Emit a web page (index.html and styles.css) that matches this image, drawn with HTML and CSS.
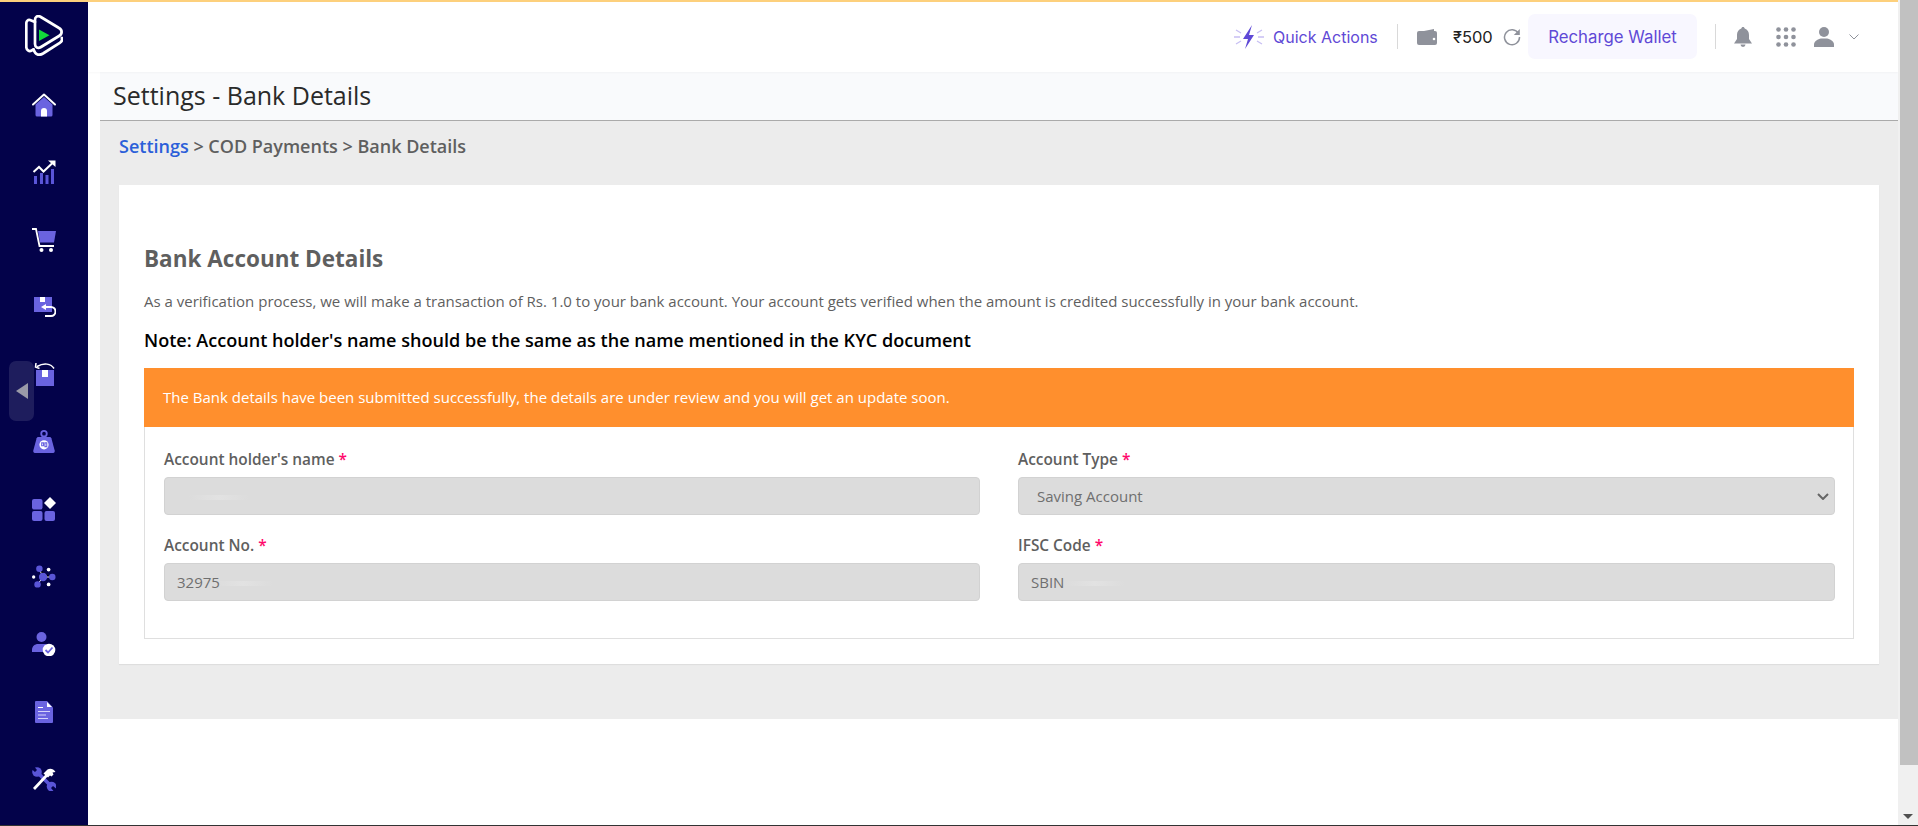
FILE: index.html
```html
<!DOCTYPE html>
<html lang="en">
<head>
<meta charset="utf-8">
<title>Settings - Bank Details</title>
<link rel="stylesheet" href="styles.css">
</head>
<body>
<div class="shell">
  <div class="window">
    <div class="topline"></div>
    <div class="frame">
      <aside class="sidebar">
        <svg class="logo" viewBox="0 0 38 41" fill="none" stroke="#fff" stroke-width="2.700" stroke-linejoin="round" stroke-linecap="round">
          <path d="M10 7 5 5C3 4.500 1.300 6 1.300 8.500V32c0 3 2.800 5 5.300 3.500L8.500 34.500"/>
          <path d="M10 5C10 2 12 .5 15 1.500L34 13c3.500 2 3.500 6 0 8L16 32c-3 1.800-6 .5-6-3z"/>
          <path d="M36.800 23c.8 2 0 3.500-2 4.800L18 38.500c-4 2.300-7.500 1.500-9.500-4"/>
          <path d="M14 14.500v11.500l10.500-5.700z" fill="#12d93a" stroke="none"/>
        </svg>
        <nav class="nav">
          <svg class="ic" viewBox="0 0 24 24"><path fill="#6a63e0" d="M3.500 11.500 12 4l8.500 7.500V22a1.500 1.500 0 0 1-1.500 1.500H5A1.500 1.500 0 0 1 3.500 22z"/><path fill="none" stroke="#fff" stroke-width="2" stroke-linecap="round" stroke-linejoin="round" d="M1 11.500 12 1.500l11 10"/><path fill="#fff" d="M9 23.500V18a3 3 0 0 1 6 0v5.500z"/></svg>
          <svg class="ic" viewBox="0 0 24 24"><path fill="#5a55d8" d="M2 16h3v8H2zM8 13h3v11H8zM13.500 15h3v9h-3zM19 9h3v15h-3z"/><path fill="none" stroke="#fff" stroke-width="2" d="m1.500 12 5.500-5 4.500 4.500 9-8.500"/><path fill="#fff" d="M16 .5h7.500V7z"/></svg>
          <svg class="ic" viewBox="0 0 24 24"><path fill="#6a63e0" d="M6 3h18l-2 11.500H8z"/><path fill="none" stroke="#fff" stroke-width="1.800" d="M0 1h4l3.500 17H22"/><circle cx="9.500" cy="22" r="2" fill="#fff"/><circle cx="19" cy="22" r="2" fill="#fff"/></svg>
          <svg class="ic" viewBox="0 0 24 24"><path fill="#6a63e0" d="M2 2h18v15H2z"/><path fill="#fff" d="M8 2h5v5H8zM14 9v6l-5-3z"/><path fill="none" stroke="#fff" stroke-width="2" d="M12 12h7a4.500 4.500 0 0 1 0 9h-6"/></svg>
          <svg class="ic" viewBox="0 0 24 24"><path fill="#6a63e0" d="M4 7h18v16H4z"/><path fill="#fff" d="M10 7h6v7h-6z"/><path fill="none" stroke="#fff" stroke-width="1.500" d="M22 5.500C19 .5 12-.5 5 3.500M4 0 3.500 4l4 1.500"/></svg>
          <svg class="ic" viewBox="0 0 24 26"><circle cx="12" cy="4" r="3" fill="none" stroke="#6a63e0" stroke-width="2"/><path fill="#6a63e0" d="M6 7.500h12c1 0 1.500.5 2 1.500l3.500 13c.5 2-.5 3-1.500 3H2c-1 0-2-1-1.500-3L4 9c.5-1 1-1.500 2-1.500z"/><circle cx="12" cy="16" r="5" fill="#fff"/><path fill="none" stroke="#6a63e0" stroke-width="1.200" d="M9.500 14h2v3h-2zM13 14h2v4h-2z"/></svg>
          <svg class="ic" viewBox="0 0 24 24"><rect x="0" y="2" width="10.500" height="10.500" rx="2" fill="#6a63e0"/><rect x="0" y="14" width="10.500" height="10" rx="2" fill="#6a63e0"/><rect x="12.500" y="14" width="10.500" height="10" rx="2" fill="#6a63e0"/><path fill="#fff" d="M18 0l6 6-6 6-6-6z"/></svg>
          <svg class="ic" viewBox="0 0 26 26"><path stroke="#fff" d="M8 5l4 8 8 0M12 13l-6 8"/><circle cx="8" cy="4" r="3.500" fill="#5a55d8"/><circle cx="12" cy="13" r="4.500" fill="#5a55d8"/><circle cx="22" cy="13" r="3.500" fill="#5a55d8"/><circle cx="6" cy="21" r="3.500" fill="#5a55d8"/><circle cx="18" cy="5" r="2" fill="#fff"/><circle cx="18" cy="21" r="2" fill="#fff"/><circle cx="1.800" cy="13" r="1.800" fill="#fff"/></svg>
          <svg class="ic" viewBox="0 0 24 24"><circle cx="9.500" cy="5" r="5" fill="#6a63e0"/><path fill="#6a63e0" d="M0 20v-2c0-4 3-6 6-6h8l3 8z"/><circle cx="17" cy="18" r="6.300" fill="#fff"/><path fill="none" stroke="#6a63e0" stroke-width="1.800" d="m13.500 18 2.500 2.500 4.500-5"/></svg>
          <svg class="ic" viewBox="0 0 24 24"><path fill="#6a63e0" d="M4 1h11l6 6.500V22a1 1 0 0 1-1 1H4a1 1 0 0 1-1-1V2a1 1 0 0 1 1-1z"/><path fill="#fff" d="M15 2l5 5h-5zM6 7h5v1H6z"/><path fill="#d5d3fa" d="M6 11h12v1H6zM6 14.500h8v1H6zM6 18h10v1H6z"/></svg>
          <svg class="ic" viewBox="0 0 24 24"><path fill="none" stroke="#5a55d8" stroke-width="3.500" d="M5 5 20 20"/><circle cx="5" cy="5" r="4.800" fill="#5a55d8"/><circle cx="19.500" cy="19.500" r="4.800" fill="#5a55d8"/><path fill="#03024a" d="M0 0h2.500l2.500 3-2 2-3-2.500zM24 24h-2.500l-2.500-3 2-2 3 2.500z"/><path fill="none" stroke="#fff" stroke-width="2.800" d="M2 22 15 8"/><path fill="#fff" d="m11.500 6.500 4-4c3-1.500 6-.5 8 2.500l-3 .5 1 2-2 2-1.500-1-2 2z"/></svg>
        </nav>
        <button class="collapse" type="button" aria-label="Collapse sidebar"><span class="collapse-arrow"></span></button>
      </aside>
      <div class="main">
        <header class="topbar">
          <svg class="bolt" viewBox="0 0 32 26"><path fill="#5f49d6" d="M19 1 10 15h5l-3 10 9-14h-5z"/><path stroke="#c7bff3" stroke-width="1.300" fill="none" d="M1 13h6M3 6l5 3M3 20l5-3M25 13h6M24 9l5-3M24 17l5 3"/></svg>
          <span class="quick">Quick Actions</span>
          <span class="vsep first"></span>
          <svg class="wallet" viewBox="0 0 20 16"><path fill="#8f929b" d="M2 3 17 0v3H2z"/><path fill="#8f929b" d="M0 4a2 2 0 0 1 2-2h16a2 2 0 0 1 2 2v10a2 2 0 0 1-2 2H2a2 2 0 0 1-2-2z"/><circle cx="17" cy="10" r="1.300" fill="#fff"/></svg>
          <span class="amount">₹500</span>
          <svg class="refresh" viewBox="0 0 18 18" fill="none"><path stroke="#8f929b" stroke-width="1.500" d="M15.500 5.500A7.500 7.500 0 1 0 16.500 9"/><path fill="#8f929b" d="M16.800 1v6h-6z"/></svg>
          <button class="recharge" type="button">Recharge Wallet</button>
          <span class="vsep second"></span>
          <svg class="bell" viewBox="0 0 18 20"><path fill="#8f929b" d="M9 0c1 0 1.500.7 1.700 1.500C13.500 2.300 15 5 15 8v4l3 4.500H0L3 12V8c0-3 1.500-5.700 4.300-6.500C7.500.7 8 0 9 0z"/><path fill="#8f929b" d="M6.500 17.500h5a2.500 2.500 0 0 1-5 0z"/></svg>
          <svg class="dots" viewBox="0 0 20 20" fill="#8f929b"><circle cx="2.500" cy="2.500" r="2.300"/><circle cx="10" cy="2.500" r="2.300"/><circle cx="17.500" cy="2.500" r="2.300"/><circle cx="2.500" cy="10" r="2.300"/><circle cx="10" cy="10" r="2.300"/><circle cx="17.500" cy="10" r="2.300"/><circle cx="2.500" cy="17.500" r="2.300"/><circle cx="10" cy="17.500" r="2.300"/><circle cx="17.500" cy="17.500" r="2.300"/></svg>
          <svg class="user" viewBox="0 0 20 20" fill="#8f929b"><circle cx="10" cy="5" r="5"/><path d="M0 20v-2.500C0 14 4 12 7 11.500h6c3 .5 7 2.500 7 6V20z"/></svg>
          <svg class="chev" viewBox="0 0 10 6" fill="none"><path stroke="#8f929b" stroke-width="1" d="m.5.5 4.500 4.500L9.500.5"/></svg>
        </header>
        <div class="titlebar"><h1 class="page-title">Settings - Bank Details</h1></div>
        <section class="content">
          <p class="crumbs"><a class="crumb-link" href="#">Settings</a> &gt; COD Payments &gt; Bank Details</p>
          <div class="card">
            <h2 class="card-title">Bank Account Details</h2>
            <p class="intro">As a verification process, we will make a transaction of Rs. 1.0 to your bank account. Your account gets verified when the amount is credited successfully in your bank account.</p>
            <p class="note">Note: Account holder's name should be the same as the name mentioned in the KYC document</p>
            <div class="panel">
              <div class="alert">The Bank details have been submitted successfully, the details are under review and you will get an update soon.</div>
              <form class="fields">
                <div class="field">
                  <label class="label">Account holder's name <span class="req">*</span></label>
                  <input class="control smudge-name" type="text" value="" disabled>
                </div>
                <div class="field">
                  <label class="label">Account Type <span class="req">*</span></label>
                  <div class="select-wrap">
                    <select class="control select" disabled><option>Saving Account</option></select>
                    <svg class="select-arrow" viewBox="0 0 12 7" fill="none"><path stroke="#666" stroke-width="2" d="m1 1 5 5 5-5"/></svg>
                  </div>
                </div>
                <div class="field">
                  <label class="label">Account No. <span class="req">*</span></label>
                  <input class="control smudge-no" type="text" value="32975" disabled>
                </div>
                <div class="field">
                  <label class="label">IFSC Code <span class="req">*</span></label>
                  <input class="control smudge-ifsc" type="text" value="SBIN" disabled>
                </div>
              </form>
            </div>
          </div>
        </section>
      </div>
    </div>
  </div>
  <div class="scrollbar">
    <div class="thumb"></div>
    <span class="scroll-arrow"></span>
  </div>
</div>
<div class="bottomline"></div>
</body>
</html>
```
FILE: styles.css
```css
* { box-sizing: border-box; }
html, body { margin: 0; height: 826px; overflow: hidden; background: #fff; }
body { font-family: "Open Sans", sans-serif; color: #5f5f5f; }
.shell { display: flex; height: 825px; }
.window { width: 1898px; display: flex; flex-direction: column; }
.topline { height: 2px; background: #fdd07c; flex: none; }
.frame { display: flex; flex: 1; min-height: 0; }

.sidebar { width: 88px; background: #03024a; position: relative; display: flex; flex-direction: column; align-items: center; flex: none; padding-top: 13px; }
.logo { width: 38px; height: 41px; }
.nav { display: flex; flex-direction: column; align-items: center; gap: 43.400px; margin-top: 37px; }
.ic { width: 24px; height: 24px; display: block; }
.collapse { position: absolute; left: 9px; top: 359px; width: 25px; height: 60px; border: 0; padding: 0; border-radius: 7px; background: rgba(255,255,255,.11); display: flex; align-items: center; justify-content: center; }
.collapse-arrow { width: 0; height: 0; border-top: 8px solid transparent; border-bottom: 8px solid transparent; border-right: 12px solid #9a9aa8; }

.main { flex: 1; min-width: 0; display: flex; flex-direction: column; }
.topbar { height: 70px; flex: none; display: flex; align-items: center; background: #fff; padding-bottom: 1px; font-family: Inter, sans-serif; box-shadow: 0 1px 2px rgba(0,0,0,.03); position: relative; }
.bolt { width: 32px; height: 26px; margin-left: 1145px; flex: none; }
.quick { width: 106px; margin-left: 8px; font-size: 16px; color: #5f49d6; white-space: nowrap; }
.vsep { width: 1px; height: 25px; background: #d9d9d9; flex: none; }
.vsep.first { margin-left: 18px; }
.wallet { width: 20px; height: 16px; margin-left: 19px; flex: none; }
.amount { width: 38px; margin-left: 16px; font-size: 16.500px; color: #222; white-space: nowrap; }
.refresh { width: 18px; height: 18px; margin-left: 12px; flex: none; }
.recharge { margin-left: 7px; width: 169px; height: 45px; border: 0; border-radius: 7px; background: #f8f7ff; color: #5f49d6; font: 16.800px Inter, sans-serif; flex: none; }
.vsep.second { margin-left: 18px; }
.bell { width: 18px; height: 20px; margin-left: 18px; flex: none; }
.dots { width: 20px; height: 20px; margin-left: 24px; flex: none; }
.user { width: 20px; height: 20px; margin-left: 18px; flex: none; }
.chev { width: 10px; height: 6px; margin-left: 15px; flex: none; }

.titlebar { margin-left: 12px; height: 49px; flex: none; background: #f9fafc; border-bottom: 1px solid #aaa; display: flex; align-items: center; }
.page-title { margin: 0 0 2px 13px; font-size: 25px; font-weight: 400; color: #2a2a2a; line-height: 1; }
.content { margin-left: 12px; height: 598px; flex: none; background: #ececec; padding: 12px 19px 0 19px; }
.crumbs { margin: 0 0 25px; font-size: 18px; font-weight: 600; line-height: 27px; color: #5f5f5f; }
.crumb-link { color: #2b5fd9; text-decoration: none; }
.card { background: #fff; height: 479px; padding: 60px 25px 0; box-shadow: 0 1px 1px rgba(0,0,0,.06); }
.card-title { margin: 0; font-size: 22.500px; font-weight: 700; line-height: 28px; color: #5f5f5f; }
.intro { margin: 18px 0 0; font-size: 15px; line-height: 20px; color: #5f5f5f; }
.note { margin: 17px 0 0; font-size: 18.070px; font-weight: 600; line-height: 24px; color: #000; }
.panel { margin-top: 16px; height: 271px; border: 1px solid #dfdfdf; }
.alert { margin: -1px -1px 0; height: 59px; background: #ff8f2d; color: #fff; font-size: 15px; line-height: 59px; padding-left: 19px; }
.fields { display: grid; grid-template-columns: 816px 817px; column-gap: 38px; row-gap: 21px; padding: 23px 0 0 19px; }
.field { display: flex; flex-direction: column; }
.label { font-size: 15.400px; font-weight: 600; line-height: 20px; margin-bottom: 7px; color: #5f5f5f; }
.req { color: #ff0a6c; }
.control { width: 100%; height: 38px; border: 1px solid #d2d2d2; border-radius: 4px; background-color: #dcdcdc; padding: 0 12px; font: 15px "Open Sans", sans-serif; color: #6f6f6f; opacity: 1; }
.select-wrap { position: relative; }
.select { padding-left: 18px; appearance: none; display: block; }
.select-arrow { position: absolute; right: 6px; top: 16px; width: 12px; height: 7px; }
.smudge-name, .smudge-no, .smudge-ifsc { background-repeat: no-repeat; background-image: linear-gradient(90deg, #dcdcdc, #e2e2e2 50%, #dcdcdc); background-size: 60px 5px; }
.smudge-name { background-position: 24px 17px; }
.smudge-no { background-position: 48px 17px; }
.smudge-ifsc { background-position: 46px 17px; }

.scrollbar { width: 20px; background: #f0f0f0; padding-left: 2px; position: relative; flex: none; }
.thumb { height: 765px; background: #c1c1c1; }
.scroll-arrow { position: absolute; left: 5px; bottom: 6px; width: 0; height: 0; border-left: 5px solid transparent; border-right: 5px solid transparent; border-top: 5px solid #505050; }
.bottomline { height: 1px; background: #333; }
```
